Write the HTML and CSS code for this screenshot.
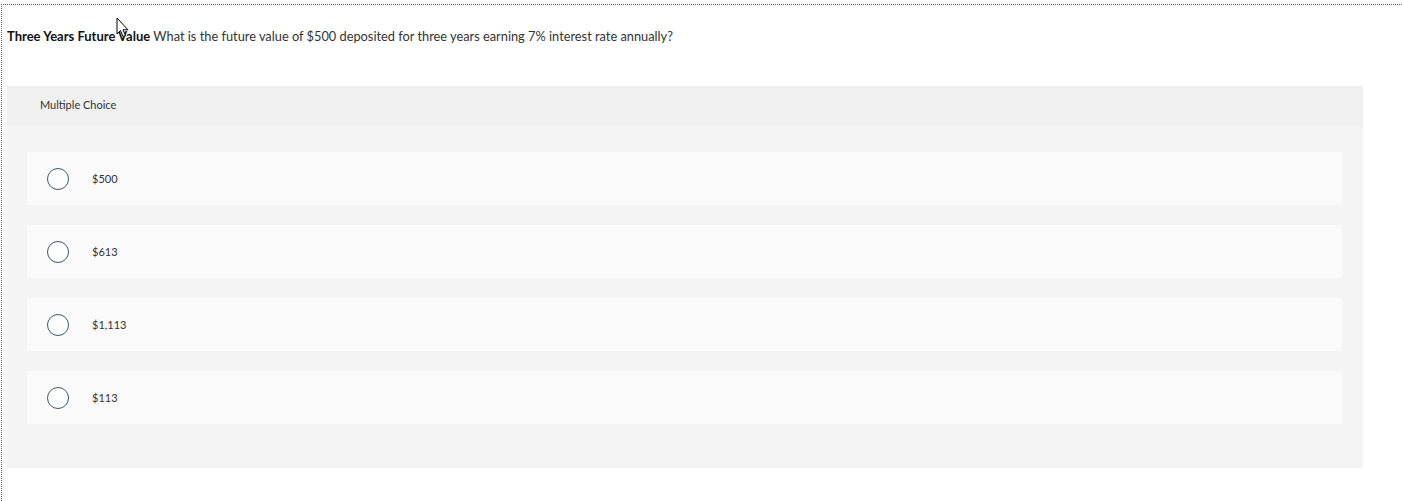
FILE: index.html
```html
<!DOCTYPE html>
<html>
<head>
<meta charset="utf-8">
<link rel="stylesheet" href="styles.css">
</head>
<body>
<div class="frame">
  <p class="question"><strong>Three Years Future Value</strong> What is the future value of $500 deposited for three years earning 7% interest rate annually?</p>
  <div class="panel">
    <div class="panel-head">Multiple Choice</div>
    <div class="options">
      <div class="option"><span class="radio"></span><span class="label">$500</span></div>
      <div class="option"><span class="radio"></span><span class="label">$613</span></div>
      <div class="option"><span class="radio"></span><span class="label">$1,113</span></div>
      <div class="option"><span class="radio"></span><span class="label">$113</span></div>
    </div>
  </div>
</div>
<svg class="cursor" width="14" height="22" viewBox="0 0 14 22"><path d="M1 1 L1 17 L4.5 13.5 L7 19.5 L9.5 18.5 L7 12.8 L12 12.8 Z" fill="#fff" stroke="#000" stroke-width="1" stroke-linejoin="miter"/></svg>
</body>
</html>
```
FILE: styles.css
```css
html, body { margin: 0; padding: 0; background: #fff; }
body { font-family: Lato, "Open Sans", sans-serif; color: #333; }
.frame {
  margin: 4px 0 0 1px;
  border-top: 1px dotted #4d6478;
  border-left: 1px dotted #4d6478;
  padding: 23px 39px 33px 5px;
  min-height: 460px;
  box-sizing: border-box;
}
.question {
  margin: 0;
  font-size: 12.8px;
  line-height: 16px;
  color: #333;
}
.question strong { color: #111; font-weight: 700; font-size: 13px; }
.panel {
  margin-top: 42px;
  background: #f4f4f4;
  padding-bottom: 44px;
}
.panel-head {
  height: 40px;
  box-sizing: border-box;
  padding-bottom: 3px;
  background: #f0f0f0;
  display: flex;
  align-items: center;
  padding-left: 33px;
  font-size: 11px;
  color: #333;
}
.options {
  display: flex;
  flex-direction: column;
  gap: 20px;
  padding: 26px 21px 0 20px;
}
.option {
  height: 53px;
  background: #fafafa;
  display: flex;
  align-items: center;
  padding-left: 20px;
}
.radio {
  width: 20px;
  height: 20px;
  border: 1.5px solid #3b5673;
  border-radius: 50%;
  background: #fff;
  flex: none;
}
.label {
  margin-left: 23px;
  margin-bottom: 1px;
  font-size: 11px;
  color: #333;
}
.cursor { position: absolute; left: 116px; top: 17px; }
```
